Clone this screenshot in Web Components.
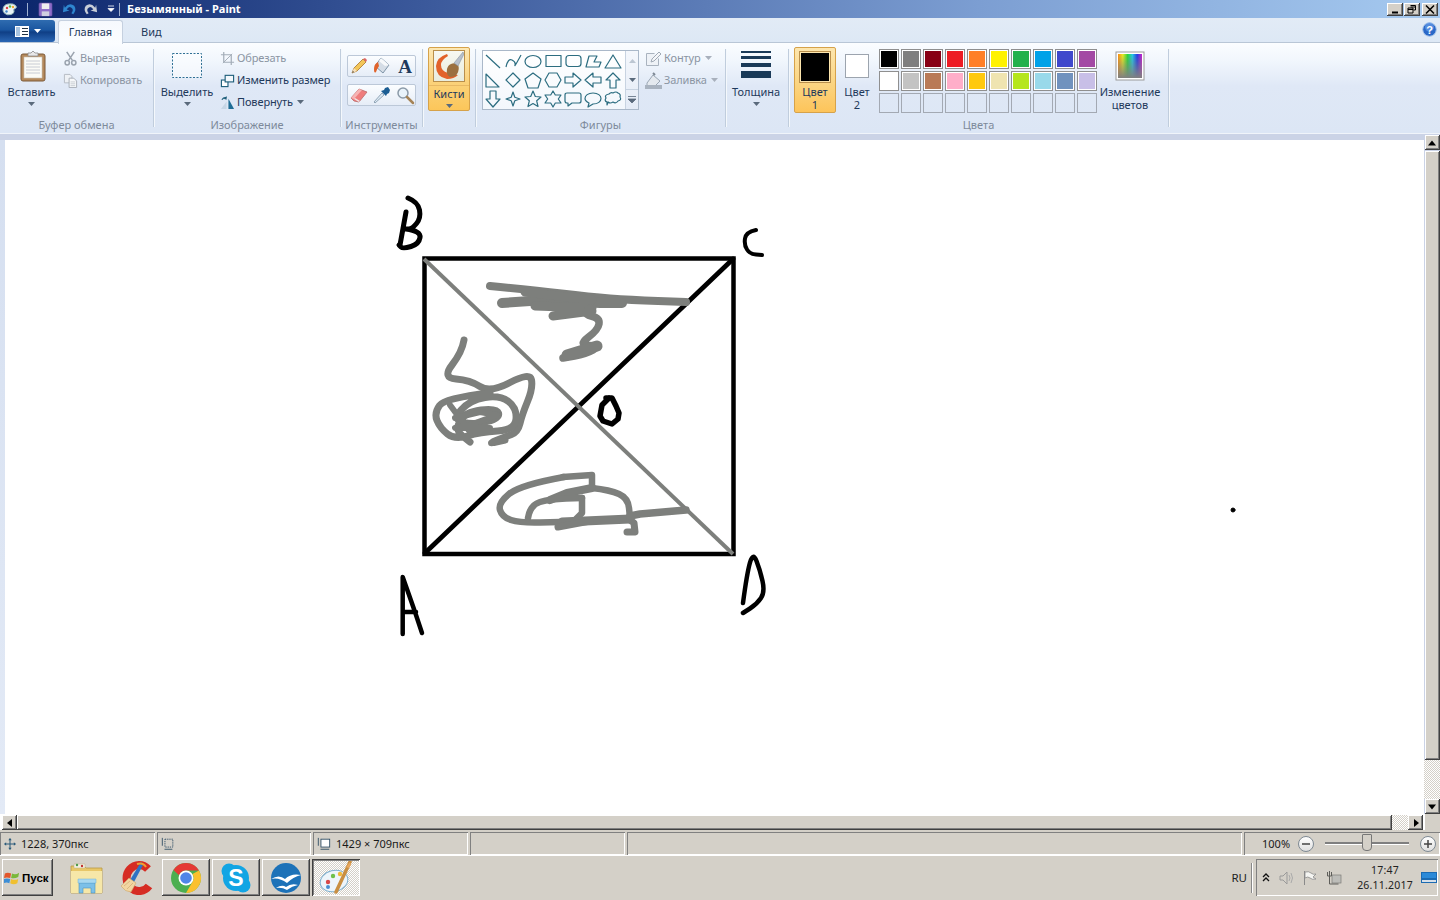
<!DOCTYPE html>
<html lang="ru"><head><meta charset="utf-8"><title>Paint</title>
<style>
html,body{margin:0;padding:0;width:1440px;height:900px;overflow:hidden;background:#d4d0c8}
body{display:flex;flex-direction:column;font:11px/14px "Noto Sans","DejaVu Sans",sans-serif;color:#1e395b}
</style></head><body>
<pt-titlebar>Безымянный - Paint</pt-titlebar>
<pt-tabs></pt-tabs>
<pt-ribbon>
  <rb-group w="153" label="Буфер обмена" style="--pl:0px">
    <rb-big w="63" h="38" caret><pt-icon slot="icon" name="paste" s="32"></pt-icon>Вставить</rb-big>
    <rb-col>
      <rb-small off><pt-icon slot="icon" name="cut" s="15"></pt-icon>Вырезать</rb-small>
      <rb-small off><pt-icon slot="icon" name="copy" s="15"></pt-icon>Копировать</rb-small>
    </rb-col>
  </rb-group>
  <rb-sep></rb-sep>
  <rb-group w="186" label="Изображение">
    <rb-big w="66" h="38" caret><pt-icon slot="icon" name="select" s="34"></pt-icon>Выделить</rb-big>
    <rb-col>
      <rb-small off><pt-icon slot="icon" name="crop" s="15"></pt-icon>Обрезать</rb-small>
      <rb-small><pt-icon slot="icon" name="resize" s="15"></pt-icon>Изменить размер</rb-small>
      <rb-small caret><pt-icon slot="icon" name="rotate" s="15"></pt-icon>Повернуть</rb-small>
    </rb-col>
  </rb-group>
  <rb-sep></rb-sep>
  <rb-group w="81" label="Инструменты" style="--pl:6px">
    <rb-tools>
      <rb-tool><pt-icon name="pencil" s="20"></pt-icon></rb-tool><rb-tool><pt-icon name="fill" s="20"></pt-icon></rb-tool><rb-tool class="t"><pt-icon name="textA" s="20"></pt-icon></rb-tool>
      <rb-tool><pt-icon name="eraser" s="20"></pt-icon></rb-tool><rb-tool><pt-icon name="picker" s="20"></pt-icon></rb-tool><rb-tool><pt-icon name="zoom" s="20"></pt-icon></rb-tool>
    </rb-tools>
  </rb-group>
  <rb-sep></rb-sep>
  <rb-group w="52" label="" style="--pl:5px">
    <rb-brush>Кисти</rb-brush>
  </rb-group>
  <rb-sep></rb-sep>
  <rb-group w="249" label="Фигуры" style="--pl:6px">
    <rb-gallery></rb-gallery>
    <rb-col style="margin-left:6px">
      <rb-small off caret><pt-icon slot="icon" name="outline" s="17"></pt-icon>Контур</rb-small>
      <rb-small off caret><pt-icon slot="icon" name="fillshape" s="17"></pt-icon>Заливка</rb-small>
    </rb-col>
  </rb-group>
  <rb-sep></rb-sep>
  <rb-group w="62" label="">
    <rb-big w="60" h="38" caret><pt-icon slot="icon" name="size" s="32"></pt-icon>Толщина</rb-big>
  </rb-group>
  <rb-sep></rb-sep>
  <rb-group w="379" label="Цвета" style="--pl:5px">
    <rb-color active><span>Цвет<br>1</span></rb-color>
    <rb-color><span>Цвет<br>2</span></rb-color>
    <rb-palette></rb-palette>
    <rb-big w="64" h="38" style="margin-left:1px" two><pt-icon slot="icon" name="spectrum" s="32"></pt-icon>Изменение<br>цветов</rb-big>
  </rb-group>
  <rb-sep></rb-sep>
</pt-ribbon>
<pt-workspace></pt-workspace>
<pt-hscroll></pt-hscroll>
<pt-status>
  <pt-pane w="155"><pt-icon slot="icon" name="cross" s="12"></pt-icon>1228, 370пкс</pt-pane>
  <pt-pane w="154"><pt-icon slot="icon" name="selsize" s="14"></pt-icon></pt-pane>
  <pt-pane w="155"><pt-icon slot="icon" name="imgsize" s="14"></pt-icon>1429 × 709пкс</pt-pane>
  <pt-pane w="155"></pt-pane>
  <pt-pane w="615"></pt-pane>
  <pt-zoom>100%</pt-zoom>
</pt-status>
<win-taskbar>
  <win-start>Пуск</win-start>
  <win-task flat><pt-icon name="folder" s="34"></pt-icon></win-task>
  <win-task flat style="margin-right:8px"><pt-icon name="ccleaner" s="34"></pt-icon></win-task>
  <win-task><pt-icon name="chrome" s="32"></pt-icon></win-task>
  <win-task><pt-icon name="skype" s="32"></pt-icon></win-task>
  <win-task><pt-icon name="oo" s="32"></pt-icon></win-task>
  <win-task active><pt-icon name="palette" s="34"></pt-icon></win-task>
  <win-tray></win-tray>
</win-taskbar>
<script>
const sh='fill="none" stroke="#2c6d80" stroke-width="1.2" stroke-linejoin="round"';
const ICONS={
paste:[32,`<rect x="5" y="4" width="24" height="27" rx="2" fill="#b58a5c" stroke="#7d5a38"/><rect x="8" y="7" width="18" height="21" fill="#fbfbf6" stroke="#c9c4b8" stroke-width=".6"/><path d="M10 11h14M10 14h14M10 17h14M10 20h14M10 23h14" stroke="#c8ccd4"/><path d="M12 5V3h3l2-2 2 2h3v3H12z" fill="#e8e8e8" stroke="#8a8a8a" stroke-width=".8"/>`],
cut:[16,`<path d="M4 1l6 9M12 1L6 10" stroke="#9aa3ae" stroke-width="1.6"/><circle cx="4.5" cy="12.5" r="2.3" fill="none" stroke="#9aa3ae" stroke-width="1.6"/><circle cx="11.5" cy="12.5" r="2.3" fill="none" stroke="#9aa3ae" stroke-width="1.6"/>`],
copy:[16,`<path d="M1.500 1.500h6l2 2v7h-8z" fill="#eef1f5" stroke="#b4bac2"/><path d="M6.500 5.500h5l3 3v7h-8z" fill="#f6f8fa" stroke="#a8aeb7"/><path d="M8 9.500h5M8 11.500h5M8 13.500h5" stroke="#c8ccd2"/>`],
select:[34,`<rect x="2.500" y="4.500" width="29" height="24" fill="#fff" fill-opacity=".5" stroke="#2f7094" stroke-width="1" stroke-dasharray="2 1.500"/>`],
crop:[16,`<path d="M4 1v11h11M1 4h11v11" fill="none" stroke="#a3adb8" stroke-width="1.300"/><path d="M3 13L13 3" stroke="#a3adb8"/>`],
resize:[16,`<rect x="1.500" y="7.500" width="7" height="7" fill="#fff" stroke="#1f5f7a" stroke-width="1.200"/><rect x="5.500" y="2.500" width="9" height="7" fill="#f3f8fc" stroke="#1f5f7a" stroke-width="1.200"/>`],
rotate:[16,`<path d="M9 4l6 11H9z" fill="#1f6d96"/><path d="M7 15H1l6-8z" fill="#c6d6e6"/><path d="M2 5q2-3 5-2" fill="none" stroke="#1f5f7a" stroke-width="1.200"/><path d="M7 1v4l-3-1z" fill="#1f5f7a"/>`],
pencil:[20,`<path d="M3 17l2-5L14 3l3 3-9 9z" fill="#f3c659" stroke="#a8752a" stroke-width=".8"/><path d="M14 3l3 3 1-2-2-2z" fill="#d66"/><path d="M3 17l2-5 3 3z" fill="#f7e0bc"/><path d="M3 17l1-2 1 1z" fill="#444"/>`],
fill:[20,`<path d="M9 2l8 7-6 8-8-7z" fill="#d5dde6" stroke="#7e94a8"/><path d="M9 2l8 7-4 1-6-5z" fill="#f7f9fb"/><path d="M6 6Q2 8 2 13t2 3q1-3 3-6z" fill="#e0632b"/>`],
textA:[20,`<text x="10" y="17" text-anchor="middle" font-family="Liberation Serif" font-weight="700" font-size="19" fill="#1e3a5c">A</text>`],
eraser:[20,`<path d="M2 13l8-9 8 3-8 10-5-1z" fill="#ef7d7d" stroke="#b96a6a" stroke-width=".8"/><path d="M2 13l3 1 8-9-3-1z" fill="#f7b3b3"/><path d="M5 14l5 3 1-1-5-3z" fill="#f0e6e6"/>`],
picker:[20,`<path d="M3 18l-1-1 8-9 2 2z" fill="#dce9f3" stroke="#7d94a8" stroke-width=".8"/><path d="M9 6l5 5 1-2 2-1 1-3-2-3-3 1-1 2z" fill="#1b5d93"/>`],
zoom:[20,`<circle cx="8" cy="8" r="5" fill="#e9f3fa" stroke="#8b9aa8" stroke-width="1.500"/><path d="M12 12l6 6" stroke="#a58457" stroke-width="2.500" stroke-linecap="round"/>`],
outline:[17,`<path d="M9.500 3.500h-8v12h12v-7" fill="#eef2f7" stroke="#a9b3bf"/><path d="M6 12l1-3 7-7 2 2-7 7z" fill="#f4f6f9" stroke="#a0aab6"/>`],
fillshape:[17,`<path d="M2 11l6-8 7 6-5 5H2z" fill="#e4e9ef" stroke="#9aa6b3"/><rect x="0" y="13" width="17" height="4" fill="#a9b3c0"/><path d="M8 1l2 2" stroke="#7c8794" stroke-width="2"/>`],
size:[32,`<rect x="1" y="1" width="30" height="2" fill="#1a3a58"/><rect x="1" y="6" width="30" height="3" fill="#1a3a58"/><rect x="1" y="13" width="30" height="4" fill="#1a3a58"/><rect x="1" y="21" width="30" height="7" fill="#1a3a58"/>`],
spectrum:[32,`<defs><linearGradient id="r" x1="0" x2="1"><stop offset="0" stop-color="#ff8a10"/><stop offset=".2" stop-color="#e8ee20"/><stop offset=".4" stop-color="#28d838"/><stop offset=".6" stop-color="#20c8e8"/><stop offset=".8" stop-color="#2038e8"/><stop offset="1" stop-color="#d020c8"/></linearGradient><linearGradient id="g" x1="0" x2="0" y1="0" y2="1"><stop offset="0" stop-color="#808080" stop-opacity="0"/><stop offset="1" stop-color="#808080"/></linearGradient></defs><rect x="2" y="2" width="28" height="28" fill="#fff" stroke="#9a9a9a"/><rect x="4" y="4" width="24" height="24" fill="url(#r)"/><rect x="4" y="4" width="24" height="24" fill="url(#g)"/>`],
cross:[14,`<path d="M7 1v12M1 7h12" stroke="#2b5b7a" stroke-width="1.200"/><path d="M7 0l2 2.500H5zM7 14l2-2.500H5zM0 7l2.500 2V5zM14 7l-2.500 2V5z" fill="#2b5b7a"/>`],
selsize:[16,`<rect x="4.500" y="2.500" width="9" height="9" fill="none" stroke="#2b4a62" stroke-dasharray="1.500 1"/><path d="M1.500 1v9M4 14h9" stroke="#2b4a62"/>`],
imgsize:[16,`<rect x="4.500" y="2.500" width="10" height="9" fill="#fff" stroke="#2b4a62"/><path d="M1.500 1v9M4 14h10" stroke="#2b4a62"/>`],
folder:[34,`<path d="M1 5h13l2 2h16v25H1z" fill="#e8c768" stroke="#b99a45" stroke-width=".8"/><path d="M4 3h11v4H4z" fill="#f4f0e0" stroke="#b9b08a" stroke-width=".5"/><circle cx="7" cy="4" r="1.200" fill="#4a9a4a"/><circle cx="12" cy="5" r="1.200" fill="#c03030"/><path d="M1 10h31v22H1z" fill="#f6e7a8"/><path d="M9 22h16v10h-4v-5h-8v5H9z" fill="#7cc0e8" stroke="#4a90c0" stroke-width=".6"/><path d="M8 18h18v4H8z" fill="#a8d8f0" stroke="#6fb0d8" stroke-width=".5"/>`],
ccleaner:[34,`<path d="M28 8A12.500 13 0 1 0 29 25" fill="none" stroke="#d62c24" stroke-width="8"/><path d="M21 1q2 1 2 3L14 21l-4-2z" fill="#2f72c4"/><path d="M17 3q6-2 9 3" fill="none" stroke="#f0a030" stroke-width="2"/><path d="M1 25l8-8 7 5-5 9Q5 31 1 25z" fill="#f2d6a2" stroke="#c9a46c" stroke-width=".6"/><path d="M4 25l6-5M7 28l6-6" stroke="#c9a46c" stroke-width=".6"/>`],
chrome:[32,`<circle cx="16" cy="16" r="15" fill="#4caf50"/><path d="M16 1a15 15 0 0 1 13 7.500H16a7.500 7.500 0 0 0-7 4.700L3.500 8A15 15 0 0 1 16 1z" fill="#e53935"/><path d="M29 8.500A15 15 0 0 1 16 31l6.500-11.300A7.500 7.500 0 0 0 22.500 12z" fill="#fbc02d"/><circle cx="16" cy="16" r="7.500" fill="#fff"/><circle cx="16" cy="16" r="5.800" fill="#4f86e8"/>`],
skype:[32,`<circle cx="16" cy="16" r="13" fill="#12a5e4"/><circle cx="9" cy="9" r="7.500" fill="#12a5e4"/><circle cx="23" cy="23" r="7.500" fill="#12a5e4"/><text x="16" y="24" text-anchor="middle" font-family="Liberation Sans" font-weight="700" font-size="23" fill="#fff">S</text>`],
oo:[32,`<circle cx="16" cy="16" r="15" fill="#1d72b8"/><path d="M1 17Q9 12 15 17Q21 11 31 13Q23 15 17 21Q9 15 1 17z" fill="#fff"/><path d="M6 26Q12 22 16 25Q21 21 28 23Q22 24 17 28Q12 25 6 26z" fill="#fff"/>`],
palette:[34,`<ellipse cx="15" cy="20" rx="14" ry="10.500" transform="rotate(-14 15 20)" fill="#eef5fa" stroke="#7fb0cf"/><circle cx="9" cy="21" r="2.200" fill="#d94848"/><circle cx="14" cy="15" r="2.200" fill="#6ec04a"/><circle cx="21" cy="13" r="2.200" fill="#f0b838"/><circle cx="9" cy="26" r="2" fill="#4a8ed0"/><path d="M31 1L17 31" stroke="#c98f42" stroke-width="3.500" stroke-linecap="round"/><path d="M31 1l1 3-2 3-3-1z" fill="#e8a860"/>`],
pal16:[16,`<path d="M1 9Q1 4 6 3q6-1 8 2 1 2-1 2.500-2 .5-1 3 0 2-3 3-4 1-6-1-2-1-2-3.500z" fill="#eaf3f8" stroke="#9bb"/><circle cx="5" cy="7" r="1.200" fill="#d44"/><circle cx="8" cy="5.500" r="1.200" fill="#5b4"/><circle cx="11" cy="6" r="1.200" fill="#ea3"/><circle cx="4.500" cy="10.500" r="1.200" fill="#48c"/>`],
save:[16,`<rect x="1" y="1" width="14" height="14" rx="1" fill="#8d6cc8" stroke="#5d4a98" stroke-width=".6"/><rect x="4" y="1.500" width="8" height="6" fill="#eee"/><rect x="4" y="10" width="8" height="5" fill="#cfcfe0"/>`],
undo:[16,`<path d="M3 7Q8 1 13 5q3 4-1 9l-2-1q3-4 0-6-3-2-5 2l3 1-7 2 1-8z" fill="#2e86cf" transform="translate(0,-1)"/>`],
redo:[16,`<path d="M13 7Q8 1 3 5q-3 4 1 9l2-1q-3-4 0-6 3-2 5 2l-3 1 7 2-1-8z" fill="#c8ced8" transform="translate(0,-1)"/>`],
help:[15,`<circle cx="7.500" cy="7.500" r="6.800" fill="#2a68c8" stroke="#a8c4e8"/><circle cx="7.500" cy="5" r="4.500" fill="#6fa4ec" opacity=".6"/><text x="7.500" y="11.500" text-anchor="middle" font-family="Liberation Sans" font-weight="700" font-size="11" fill="#fff">?</text>`],
flag:[18,`<path d="M1 4Q4 2 8 4l-1 5Q3 8 0 9z" fill="#e2572c"/><path d="M9 4q4 2 8-1l-1 5q-4 2-8 1z" fill="#7ab83a"/><path d="M0 10q3-1 7 0l-1 5q-3-2-7 0z" fill="#3d8ed6"/><path d="M8 10q4 2 8 0l-1 5q-4 2-8 0z" fill="#f0c030"/>`],
speaker:[16,`<path d="M2 6h3l4-4v12l-4-4H2z" fill="none" stroke="#9a9a9a"/><path d="M11 5q2 3 0 6M13 3q3 5 0 10" fill="none" stroke="#aaa"/>`],
tflag:[16,`<path d="M2.500 1v14" stroke="#8a8a8a"/><path d="M3 2q4-1 6 1t5 1l-3 3 3 2q-4 1-6-1T3 8z" fill="#f5f5f2" stroke="#8a8a8a" stroke-width=".8"/>`],
net:[16,`<rect x="6" y="5" width="9" height="8" fill="#bdbdb9" stroke="#7c7c78" stroke-width=".7"/><path d="M3.500 1v8M1.500 2v4h4V2M3.500 9v5h9" fill="none" stroke="#5e5e5a"/>`],
desk:[16,`<rect x="0" y="2" width="16" height="11" fill="#1b6bb2"/><rect x="1" y="3" width="14" height="5" fill="#2b8ad8"/><rect x="1" y="10" width="14" height="2" fill="#d6e0ea"/>`]
};
const SHAPES=[
'<path d="M2 3l14 13"/>','<path d="M2 15q2-9 6-7t3 5 6-10"/>','<ellipse cx="9" cy="9.500" rx="8" ry="6"/>','<rect x="2" y="3.500" width="15" height="11"/>','<rect x="2" y="3.500" width="15" height="11" rx="3"/>','<path d="M2 15l3-11h8l-3 6h7l-2 5z"/>','<path d="M9 3l8 13H1z"/>',
'<path d="M2 3l13 13H2z"/>','<path d="M9 2l7 7-7 7-7-7z"/>','<path d="M9 2l8 6-3 9H4L1 8z"/>','<path d="M5 2h8l4 7-4 7H5L1 9z"/>','<path d="M1 6h8V2l8 7-8 7v-4H1z"/>','<path d="M17 6H9V2L1 9l8 7v-4h8z"/>','<path d="M6 17V9H2l7-7 7 7h-4v8z"/>',
'<path d="M6 1v8H2l7 8 7-8h-4V1z"/>','<path d="M9 2l1.800 5.200L16 9l-5.200 1.800L9 16l-1.800-5.200L2 9l5.200-1.800z"/>','<path d="M9 1l2.300 5.500 5.700.5-4.300 3.800 1.300 5.700L9 13.500 4 16.500l1.300-5.700L1 7l5.700-.5z"/>','<path d="M9 1l2.300 4H17l-2.700 4L17 13h-5.700L9 17l-2.300-4H1l2.700-4L1 5h5.700z"/>','<path d="M3 3h12q2 0 2 2v6q0 2-2 2H8l-4 3v-3H3q-2 0-2-2V5q0-2 2-2z"/>','<path d="M9 3c5 0 8 2.500 8 5.500S14 14 9 14l-5 3 1-4C3 12 1 10.500 1 8.500 1 5.500 4 3 9 3z"/>','<path d="M5 4q2-2 4-1 3-2 5 0 3 1 2 4 2 3-2 4-2 3-5 1-3 2-5 0l-1 3v-3Q0 11 2 8 0 5 5 4z"/>'];
const el=(n,css,html,extra)=>customElements.define(n,class extends HTMLElement{
  constructor(){super();this.attachShadow({mode:'open'});}
  connectedCallback(){this.shadowRoot.innerHTML='<style>'+css+'</style>'+(typeof html=='function'?html(this):html);if(extra)extra(this)}
});
const ic=(n,s)=>{const[v,b]=[ICONS[n][0],ICONS[n][1]];return `<svg width="${s||v}" height="${s||v}" viewBox="0 0 ${v} ${v}" style="display:block">${b}</svg>`};
const RAISED='box-shadow:inset -1px -1px #404040,inset 1px 1px #fff,inset -2px -2px #808080;';
const SUNK='box-shadow:inset 1px 1px #808080,inset -1px -1px #fff;';
const CARET='<svg width="7" height="4" viewBox="0 0 7 4"><path d="M0 0h7L3.500 4z" fill="#5a6a7c"/></svg>';
const DITHER='background:repeating-conic-gradient(#fff 0 25%,#d4d0c8 0 50%) 0 0/2px 2px;';

el('pt-icon',':host{display:block;flex:none}',t=>ic(t.getAttribute('name'),+t.getAttribute('s')));

el('pt-titlebar',`:host{display:flex;align-items:center;flex:none;height:18px;background:linear-gradient(90deg,#0a246a 0,#3c5a9c 30%,#7c9ed2 68%,#a6caf0 100%);color:#fff;font:700 11px/18px "Noto Sans","DejaVu Sans",sans-serif}
.q{display:flex;align-items:center;width:127px;flex:none;position:relative}
.sp{width:1px;height:13px;background:#9fb0d0;flex:none}
.t{flex:1}
.b{width:16px;height:13px;background:#d4d0c8;${RAISED}display:flex;align-items:center;justify-content:center;margin-right:1px;flex:none}
.w{display:flex;margin-right:1px}`,
`<div class="q"><div style="margin-left:2px">${ic('pal16',16)}</div><div class="sp" style="margin-left:9px"></div><div style="margin-left:10px">${ic('save',15)}</div><div style="margin-left:9px">${ic('undo',15)}</div><div style="margin-left:6px">${ic('redo',15)}</div><svg style="margin-left:9px" width="8" height="8" viewBox="0 0 8 8"><path d="M1 1h6M1 3.500h6l-3 3z" stroke="#fff" fill="#fff" stroke-width=".8"/></svg><div class="sp" style="margin-left:4px"></div></div>
<div class="t"><slot></slot></div>
<div class="w"><div class="b"><svg width="10" height="9" viewBox="0 0 10 9"><rect x="2" y="6.500" width="6" height="2" fill="#000"/></svg></div><div class="b"><svg width="10" height="9" viewBox="0 0 10 9"><path d="M3.500 .5h5v4.500h-2M3.500 2h5M1 3h5v5H1zM1 4.500h5" fill="none" stroke="#000"/></svg></div><div class="b" style="margin-left:1px"><svg width="10" height="9" viewBox="0 0 10 9"><path d="M1 .5l8 8M9 .5l-8 8" stroke="#000" stroke-width="1.500"/></svg></div></div>`);

el('pt-tabs',`:host{display:flex;flex:none;height:25px;box-sizing:border-box;padding-top:2px;background:linear-gradient(#e2ebf6,#dde8f5);border-bottom:1px solid #b9c6d6;color:#1e395b;align-items:flex-start;position:relative}
.f{width:55px;height:22px;border-radius:0 3px 3px 0;background:linear-gradient(#2f6cb0 0,#1a56a0 45%,#0f3f86 55%,#2a66b4 100%);display:flex;align-items:center;justify-content:center;gap:5px;flex:none}
.h{margin-left:3px;width:65px;box-sizing:border-box;border:1px solid #c5d0df;border-bottom:0;border-radius:3px 3px 0 0;background:linear-gradient(#f6f9fd,#fbfdff);text-align:center;line-height:22px;position:relative;z-index:1;height:24px}
.v{margin-left:18px;line-height:24px}
.help{position:absolute;right:3px;top:4px}`,
`<div class="f"><svg width="14" height="11" viewBox="0 0 14 11"><rect width="14" height="11" fill="#fff"/><rect x="1" y="1" width="4" height="9" fill="#a8c4e0"/><path d="M7 2.500h6M7 5.500h6M7 8.500h6" stroke="#234"/></svg><svg width="7" height="4" viewBox="0 0 7 4"><path d="M0 0h7L3.500 4z" fill="#fff"/></svg></div><div class="h">Главная</div><div class="v">Вид</div><div class="help">${ic('help',15)}</div>`);

el('pt-ribbon',`:host{display:flex;flex:none;height:91px;box-sizing:border-box;border-bottom:1px solid #f0f4fa;background:linear-gradient(#fbfdff 0,#f2f7fd 18%,#dfe8f6 48%,#dce6f5 100%)}`,'<slot></slot>');

el('rb-group',`:host{display:flex;flex-direction:column;flex:none;height:90px;box-sizing:border-box;padding-top:4px}
.c{display:flex;height:71px;padding-left:var(--pl,0);align-items:flex-start}
.l{height:14px;line-height:13px;text-align:center;color:#7d8a9b}`,
t=>{t.style.width=t.getAttribute('w')+'px';return `<div class="c"><slot></slot></div><div class="l">${t.getAttribute('label')}</div>`});

el('rb-sep',`:host{display:block;flex:none;width:1px;height:78px;margin-top:6px;background:#c0cddd;box-shadow:1px 0 #f4f8fc}`,'');

el('rb-big',`:host{display:flex;flex-direction:column;align-items:center;flex:none;text-align:center}
.i{display:flex;align-items:center;justify-content:center;width:100%}
.l{line-height:14px;height:14px;white-space:nowrap}
:host([two]) .l{height:28px;line-height:13px}
.a{height:10px;display:flex;align-items:center}`,
t=>{t.style.width=t.getAttribute('w')+'px';return `<div class="i" style="height:${t.getAttribute('h')}px"><slot name="icon"></slot></div><div class="l"><slot></slot></div>${t.hasAttribute('caret')?'<div class="a">'+CARET+'</div>':''}`});

el('rb-col',`:host{display:flex;flex-direction:column;flex:none}`,'<slot></slot>');
el('rb-small',`:host{display:flex;align-items:center;gap:2px;height:22px;white-space:nowrap;letter-spacing:-.12px}
:host([off]){color:#8b95a3}
.a{margin-left:2px;display:flex}`,
t=>`<slot name="icon"></slot><slot></slot>${t.hasAttribute('caret')?'<span class="a">'+CARET.replace('#5a6a7c',t.hasAttribute('off')?'#a8b0bc':'#5a6a7c')+'</span>':''}`);

el('rb-tools',`:host{display:grid;grid-template-columns:repeat(3,23px);grid-auto-rows:22px;row-gap:7px;margin-top:8px;flex:none;position:relative}
.o{position:absolute;left:0;width:69px;height:22px;box-sizing:border-box;border:1px solid #bcc8d8;border-radius:2px;background:linear-gradient(#fbfdff,#e6edf7);}`,
`<div class="o" style="top:0"></div><div class="o" style="top:29px"></div><slot></slot>`);
el('rb-tool',`:host{display:flex;align-items:center;justify-content:center;position:relative}`,'<slot></slot>');

el('rb-brush',`:host{display:flex;flex-direction:column;align-items:center;width:42px;height:64px;box-sizing:border-box;border:1px solid #d6a24a;border-radius:2px;background:linear-gradient(#fde8b4,#fbd27a 55%,#fcc65a);flex:none}
.i{width:32px;height:32px;margin-top:2px;background:linear-gradient(#f7f8f2,#e8ecde);border:1px solid #b98f4c;box-sizing:border-box}
.l{margin-top:3px;line-height:14px;padding-top:1px;border-top:1px solid #e8b964;width:100%;text-align:center}
.a{height:10px;display:flex;align-items:center}`,
`<div class="i"><svg width="30" height="30" viewBox="0 0 30 30" style="display:block"><path d="M13 3Q3 6 2 15q0 11 11 13 7 0 11-4-7-1-10-2-7-2-7-8 0-5 7-9z" fill="#e2622a"/><path d="M13 18q-1 6 3 8 6 0 7-3 3-5 1-9-3-3-7-1-3 1-4 5z" fill="#9b7040"/><path d="M20 12L29 1l1 2-6 12z" fill="#b8c0cc" stroke="#7d8894" stroke-width=".5"/></svg></div><div class="l"><slot></slot></div><div class="a">${CARET}</div>`);

el('rb-gallery',`:host{display:flex;width:157px;height:60px;box-sizing:border-box;border:1px solid #aab8c9;margin-top:3px;flex:none}
.g{display:grid;grid-template-columns:repeat(7,20px);grid-auto-rows:19.300px;width:142px;background:linear-gradient(#fff,#f3f7fc)}
.g div{display:flex;align-items:center;justify-content:center}
.s{flex:1;display:flex;flex-direction:column;background:linear-gradient(#f4f7fc,#e4ebf6);border-left:1px solid #c8d3e1}
.s div{flex:1;display:flex;align-items:center;justify-content:center}`,
`<div class="g">${SHAPES.map(p=>`<div><svg width="18" height="18" viewBox="0 0 18 18" ${sh}>${p}</svg></div>`).join('')}</div>
<div class="s"><div><svg width="7" height="4" viewBox="0 0 7 4"><path d="M0 4h7L3.500 0z" fill="#bcc6d2"/></svg></div><div>${CARET}</div><div style="border-top:1px solid #c8d3e1"><svg width="8" height="7" viewBox="0 0 8 7"><path d="M0 .5h8M0 3h8L4 7z" stroke="#5a6a7c" fill="#5a6a7c" stroke-width=".8"/></svg></div></div>`);

el('rb-color',`:host{display:flex;flex-direction:column;align-items:center;box-sizing:border-box;width:42px;height:66px;text-align:center;line-height:13px;flex:none;margin-right:9px}
:host([active]){border:1px solid #d6a24a;border-radius:2px;background:linear-gradient(#fde6ae,#fbd37e 60%,#fdc45a)}
:host(:not([active])){width:24px;margin-right:10px}
.s{box-sizing:border-box}
:host([active]) .s{width:32px;height:32px;margin-top:3px;background:#000;border:1px solid #b98f4c;box-shadow:inset 0 0 0 1px #fde6ae;margin-bottom:2px}
:host(:not([active])) .s{width:24px;height:24px;margin-top:7px;background:#fff;border:1px solid #9ca4ae}
:host(:not([active])) .t{padding-top:7px}`,
`<div class="s"></div><div class="t"><slot></slot></div>`);

el('rb-palette',`:host{display:grid;grid-template-columns:repeat(10,20px);grid-auto-rows:20px;gap:2px;flex:none;margin-top:2px}
div{box-sizing:border-box;border:1px solid #8f8f8f}
.c{box-shadow:inset 0 0 0 1px #fff}
.e{border-color:#a3a9b3}`,
()=>{const c=['#000000','#7f7f7f','#880015','#ed1c24','#ff7f27','#fff200','#22b14c','#00a2e8','#3f48cc','#a349a4','#ffffff','#c3c3c3','#b97a57','#ffaec9','#ffc90e','#efe4b0','#b5e61d','#99d9ea','#7092be','#c8bfe7'];
return c.map(x=>`<div class="c" style="background:${x}"></div>`).join('')+'<div class="e"></div>'.repeat(10)});

const sbtn=(d)=>{const p={u:'M1 6h8L5 1z',d:'M1 1h8L5 6z',l:'M6 1v8L1 5z',r:'M1 1v8l5-4z'}[d];return `<svg width="10" height="10" viewBox="0 0 10 10" style="display:block"><path d="${p}" fill="#000" transform="translate(${d=='r'?2:d=='l'?1:0},${d=='u'||d=='d'?1.500:0})"/></svg>`};

/* freehand strokes: point lists are rounded into quadratic curves, as a brush stroke would be */
const smooth=d=>d.split('M').filter(Boolean).map(s=>{const n=s.match(/-?[\d.]+/g).map(Number),p=[];for(let i=0;i<n.length;i+=2)p.push([n[i],n[i+1]]);
  let o=`M${p[0][0]} ${p[0][1]}`;for(let i=1;i<p.length-1;i++){const m=[(p[i][0]+p[i+1][0])/2,(p[i][1]+p[i+1][1])/2];o+=`Q${p[i][0]} ${p[i][1]} ${m[0]} ${m[1]}`}
  const l=p[p.length-1];return o+`L${l[0]} ${l[1]}`}).join('');

el('pt-workspace',`:host{display:flex;flex:none;height:680px}
.l{width:1424px;display:flex;flex-direction:column;flex:none}
.band{height:6px;background:#cbd3e6;flex:none}
.m{flex:1;display:flex;min-height:0}
.st{width:5px;background:linear-gradient(#d5dff0,#e3eaf6);flex:none}
svg.cv{flex:1;display:block;background:#fff}
.v{width:16px;flex:none;display:flex;flex-direction:column;align-items:center;padding-top:1px;box-sizing:border-box;background:#cbd3e6}
.b{width:15px;height:15px;background:#d4d0c8;${RAISED}display:flex;align-items:center;justify-content:center;flex:none}
.th{width:15px;height:609px;margin-top:1px;background:#d4d0c8;${RAISED}flex:none}
.di{flex:1;width:16px;${DITHER}}`,
`<div class="l"><div class="band"></div><div class="m"><div class="st"></div>
<svg class="cv" viewBox="5 140 1419 674" width="1419" height="674" fill="none" stroke-linecap="round" stroke-linejoin="round">
<g stroke="#000">
<rect x="424.500" y="258.500" width="309" height="295.500" stroke-width="4.500" stroke-linejoin="miter"/>
<path d="M425 553L733 259" stroke-width="4.800"/>
<path data-s stroke-width="5" d="M408 198L418 202L421 218L412 229L405 229M406 212L400 245M406 229L421 231L419 244L403 249L399 245"/>
<path data-s stroke-width="4" d="M756 230L746 232L744 245L750 254L762 255"/>
<path stroke-width="5.500" d="M609 398L602 405L600 416L603 421L612 424L618 419L619 413L616 406L612 398L606 398"/>
<path stroke-width="4.500" d="M402.700 634L402.700 577L408 592L415 612L422 633M403 612L416 612"/>
<path data-s stroke-width="4.500" d="M743 603L747 573L753 552L760 570L765 592L757 604L743 613"/>
<circle cx="1233" cy="510" r="2" fill="#000" stroke-width="1"/>
</g>
<g stroke="#7d7f7c">
<path d="M424 259L733 554" stroke-width="4" stroke-linecap="butt"/>
<path data-s stroke-width="8" d="M490 286L533 290L590 297L630 300L686 302"/>
<path stroke-width="10" d="M502 303L545 300L600 303L622 303"/>
<path stroke-width="9" d="M525 292L592 300M535 306L592 308M553 316L592 311"/>
<path data-s stroke-width="7.500" d="M590 308L582 314Q600 318 598 330L578 345L600 346L586 354L563 358"/>
<path stroke-width="11" d="M567 355L580 351L597 346"/>
<path data-s stroke-width="7" d="M464 340L462 352L442 378L470 380L490 393L530 372L533 388L522 415L518 432L505 437L487 444L505 440"/>
<path data-s stroke-width="7" d="M490 393L445 398L434 413L440 428L455 440L480 432L515 430L517 408L500 395L470 400L452 420L475 425L500 418L497 408L465 412L455 430L470 442"/>
<path stroke-width="6" d="M455 418L480 412L497 415L470 425L455 428L490 428M450 405L470 432"/>
<path stroke-width="6.500" d="M563 477L592 475L592 488"/>
<path data-s stroke-width="6.500" d="M564 477L520 485L498 503L502 517L520 523L560 522"/>
<path data-s stroke-width="6.500" d="M592 488L610 490L628 498L630 518"/>
<path stroke-width="8" d="M592 488L567 493L550 500"/>
<path data-s stroke-width="6.500" d="M528 518L530 505L550 499L582 498"/>
<path stroke-width="6.500" d="M582 498L582 513L575 520"/>
<path stroke-width="9" d="M562 522L630 519"/>
<path stroke-width="7" d="M558 527L590 521M630 520L634 523L635 532L627 532"/>
<path stroke-width="7.500" d="M630 516L640 514L686 510"/>
</g>
</svg></div></div>
<div class="v"><div class="b">${sbtn('u')}</div><div class="th"></div><div class="di"></div><div class="b">${sbtn('d')}</div></div>`,
t=>t.shadowRoot.querySelectorAll('path[data-s]').forEach(p=>p.setAttribute('d',smooth(p.getAttribute('d')))));

el('pt-hscroll',`:host{display:flex;flex:none;height:17px;box-sizing:border-box;padding:1px 0 1px 2px;background:#fff;box-shadow:inset 0 -1px #d4d0c8}
.b{width:15px;height:15px;background:#d4d0c8;${RAISED}display:flex;align-items:center;justify-content:center;flex:none;align-self:flex-start}
.th{width:1375px;height:15px;background:#d4d0c8;${RAISED}flex:none}
.di{width:16px;height:15px;${DITHER}flex:none}
.c{flex:1;height:17px;margin-top:-1px;background:#d4d0c8}`,
`<div class="b">${sbtn('l')}</div><div class="th"></div><div class="di"></div><div class="b">${sbtn('r')}</div><div style="width:2px;height:15px;background:#fff"></div><div class="c"></div>`);

el('pt-status',`:host{display:flex;flex:none;height:25px;box-sizing:border-box;padding:1px 0 0;gap:2px;background:#d4d0c8;border-bottom:1px solid #fff}`,'<slot></slot>');
el('pt-pane',`:host{display:flex;align-items:center;gap:5px;box-sizing:border-box;height:23px;padding-left:4px;${SUNK}flex:none;color:#1a1a1a;white-space:nowrap}`,
t=>{t.style.width=t.getAttribute('w')+'px';return '<slot name="icon"></slot><slot></slot>'});
el('pt-zoom',`:host{display:flex;align-items:center;flex:1;height:23px;box-sizing:border-box;${SUNK}position:relative;color:#1a1a1a;padding-left:18px}
.c{width:16px;height:16px;box-sizing:border-box;border:1px solid #7f8a94;border-radius:50%;background:linear-gradient(#fff,#dfdfdf);position:absolute;top:4px;display:flex;align-items:center;justify-content:center}
.t{position:absolute;left:81px;top:10px;width:84px;height:2px;background:#7f7f7f;border-bottom:1px solid #fff}
.k{position:absolute;left:118px;top:2px;width:10px;height:17px;background:#d4d0c8;border:1px solid #777;border-radius:1px 1px 4px 4px;box-sizing:border-box}`,
`<slot></slot><div class="c" style="left:54px"><svg width="10" height="10" viewBox="0 0 10 10"><path d="M1 5h8" stroke="#444" stroke-width="1.500"/></svg></div><div class="t"></div><div class="k"></div><div class="c" style="left:176px"><svg width="10" height="10" viewBox="0 0 10 10"><path d="M1 5h8M5 1v8" stroke="#444" stroke-width="1.500"/></svg></div>`);

el('win-taskbar',`:host{display:flex;flex:none;height:43px;box-sizing:border-box;padding:3px 2px 3px 2px;background:#d4d0c8;align-items:stretch}`,'<slot></slot>');
el('win-start',`:host{display:flex;align-items:center;gap:2px;width:51px;box-sizing:border-box;padding-left:2px;${RAISED}font:700 11.500px/14px "Liberation Sans",sans-serif;color:#000;flex:none;margin-right:17px}`,
`<div>${ic('flag',16)}</div><slot></slot>`);
el('win-task',`:host{display:flex;align-items:center;justify-content:center;width:48px;box-sizing:border-box;${RAISED}flex:none;margin-right:2px}
:host([flat]){box-shadow:none;width:34px;margin-right:16px}
:host([active]){box-shadow:inset 1px 1px #404040,inset -1px -1px #fff,inset 2px 2px #808080;${DITHER}}`,'<slot></slot>');
el('win-tray',`:host{display:flex;align-items:center;margin-left:auto;flex:none;color:#2a2a2a;position:relative}
.ru{margin-right:4px;color:#222;font-size:11.500px}
.d{width:1px;height:30px;background:#888;border-right:1px solid #fff;margin-right:3px}
.box{display:flex;align-items:center;width:182px;height:37px;box-sizing:border-box;${SUNK}padding-left:6px}
.tm{width:64px;margin-left:11px;text-align:center;line-height:15px;font-size:10.500px;color:#222;letter-spacing:.2px}`,
`<div class="ru">RU</div><div class="d"></div><div class="box"><svg width="8" height="9" viewBox="0 0 8 9"><path d="M1 4l3-3 3 3M1 8l3-3 3 3" fill="none" stroke="#111" stroke-width="1.300"/></svg><div style="margin-left:8px">${ic('speaker',16)}</div><div style="margin-left:8px">${ic('tflag',16)}</div><div style="margin-left:8px">${ic('net',16)}</div><div class="tm">17:47<br>26.11.2017</div><div style="margin-left:4px">${ic('desk',16)}</div></div>`);
</script>
</body></html>
